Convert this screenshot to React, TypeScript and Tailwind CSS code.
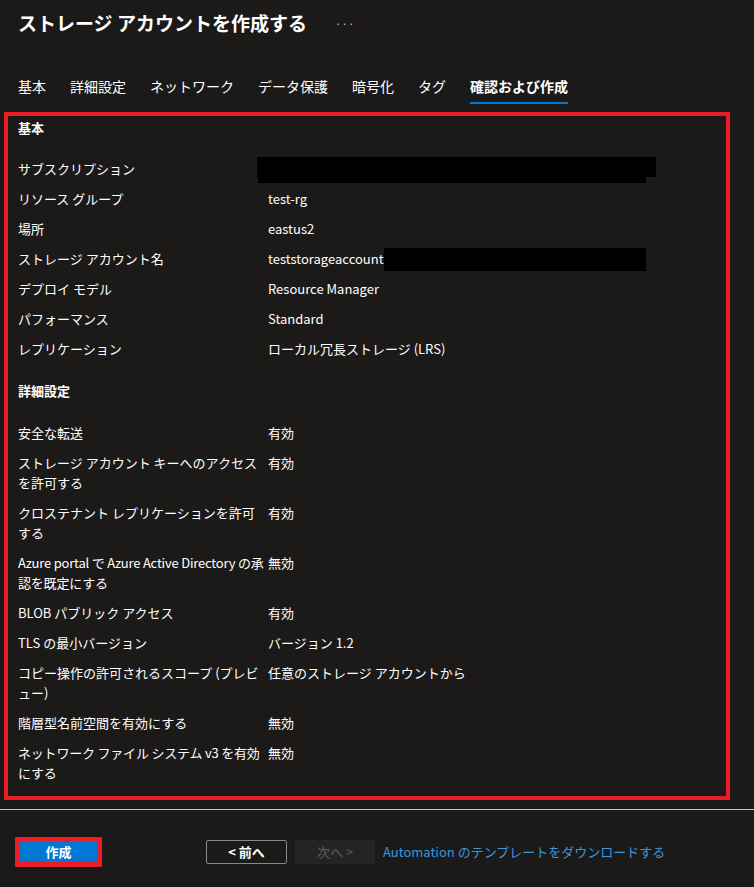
import type { ReactNode } from 'react'

const tabs = ['基本', '詳細設定', 'ネットワーク', 'データ保護', '暗号化', 'タグ', '確認および作成']

type Row = { label: ReactNode; value: ReactNode }

const basics: Row[] = [
  {
    label: 'サブスクリプション',
    value: (
      <div className="relative h-5">
        {/* 伏せ字 */}
        <div className="absolute -top-[2px] -left-[11px] h-[20px] w-[399px] bg-black" />
        <div className="absolute top-[18px] -left-[10px] h-[6px] w-[388px] bg-black" />
      </div>
    ),
  },
  { label: 'リソース グループ', value: 'test-rg' },
  { label: '場所', value: 'eastus2' },
  {
    label: 'ストレージ アカウント名',
    value: (
      <div className="flex h-5 items-center">
        <span>teststorageaccount</span>
        <span className="-my-[2px] inline-block h-[23px] w-[262px] bg-black" />
      </div>
    ),
  },
  { label: 'デプロイ モデル', value: 'Resource Manager' },
  { label: 'パフォーマンス', value: 'Standard' },
  { label: 'レプリケーション', value: 'ローカル冗長ストレージ (LRS)' },
]

const advanced: Row[] = [
  { label: '安全な転送', value: '有効' },
  { label: <>ストレージ アカウント キーへのアクセス<br />を許可する</>, value: '有効' },
  { label: <>クロステナント レプリケーションを許可<br />する</>, value: '有効' },
  {
    label: <span className="tracking-[-0.2px]">Azure portal で Azure Active Directory の承<br />認を既定にする</span>,
    value: '無効',
  },
  { label: 'BLOB パブリック アクセス', value: '有効' },
  { label: 'TLS の最小バージョン', value: 'バージョン 1.2' },
  { label: <>コピー操作の許可されるスコープ (プレビ<br />ュー)</>, value: '任意のストレージ アカウントから' },
  { label: '階層型名前空間を有効にする', value: '無効' },
  {
    label: <span className="tracking-[-0.2px]">ネットワーク ファイル システム v3 を有効<br />にする</span>,
    value: '無効',
  },
]

function Rows({ rows }: { rows: Row[] }) {
  return (
    <div>
      {rows.map((r, i) => (
        <div key={i} className="grid grid-cols-[250px_1fr] pb-[10px] text-[13px] leading-5">
          <div className="whitespace-nowrap">{r.label}</div>
          <div className="whitespace-nowrap">{r.value}</div>
        </div>
      ))}
    </div>
  )
}

export default function App() {
  return (
    <div
      className="h-[887px] w-[754px] overflow-hidden bg-[#1b1a19] text-white"
      style={{ fontFamily: '"Noto Sans CJK JP", "Noto Sans", sans-serif' }}
    >
      {/* タイトル */}
      <div className="flex items-center px-[18px] pt-[8px]">
        <h1 className="text-[19px] leading-[30px] font-semibold">ストレージ アカウントを作成する</h1>
        <span className="ml-[28px] text-[11px] tracking-[0.5px] text-[#c8c6c4]">···</span>
      </div>

      {/* タブ */}
      <div className="mt-[38px] flex gap-6 px-[18px]">
        {tabs.map((t, i) => {
          const active = i === tabs.length - 1
          return (
            <div key={t} className="flex flex-col">
              <span className={active ? 'text-[14px] leading-5 font-semibold' : 'text-[14px] leading-5'}>{t}</span>
              <div className={active ? 'mt-[6px] h-[2px] bg-[#0078d4]' : 'mt-[6px] h-[2px]'} />
            </div>
          )
        })}
      </div>

      {/* 確認内容 */}
      <div className="mt-[8px] ml-[4px] h-[688px] w-[726px] border-4 border-[#ed1c24] pt-[2px] pl-[10px]">
        <h2 className="mb-[21px] text-[13px] leading-5 font-bold">基本</h2>
        <Rows rows={basics} />
        <h2 className="mt-[12px] mb-[22px] text-[13px] leading-5 font-bold">詳細設定</h2>
        <Rows rows={advanced} />
      </div>

      <div className="mt-[9px] h-px bg-[#c8c6c4]" />

      {/* フッター */}
      <div className="mt-[27px] flex items-center pl-[15px]">
        <div className="border-x-[5px] border-t-[4px] border-b-[5px] border-[#ed1c24]">
          <button className="flex h-[21px] w-[77px] items-center justify-center bg-[#0078d4] text-[13px] font-bold text-white">
            作成
          </button>
        </div>
        <button className="ml-[104px] flex h-[24px] w-[81px] items-center justify-center rounded-[2px] border border-[#8a8886] text-[13px] font-bold">
          &lt; 前へ
        </button>
        <button className="ml-[8px] flex h-[24px] w-[80px] items-center justify-center rounded-[2px] bg-[#252423] text-[13px] text-[#605e5c]">
          次へ &gt;
        </button>
        <a className="ml-[8px] text-[13px] text-[#3a96dd]">Automation のテンプレートをダウンロードする</a>
      </div>
    </div>
  )
}
